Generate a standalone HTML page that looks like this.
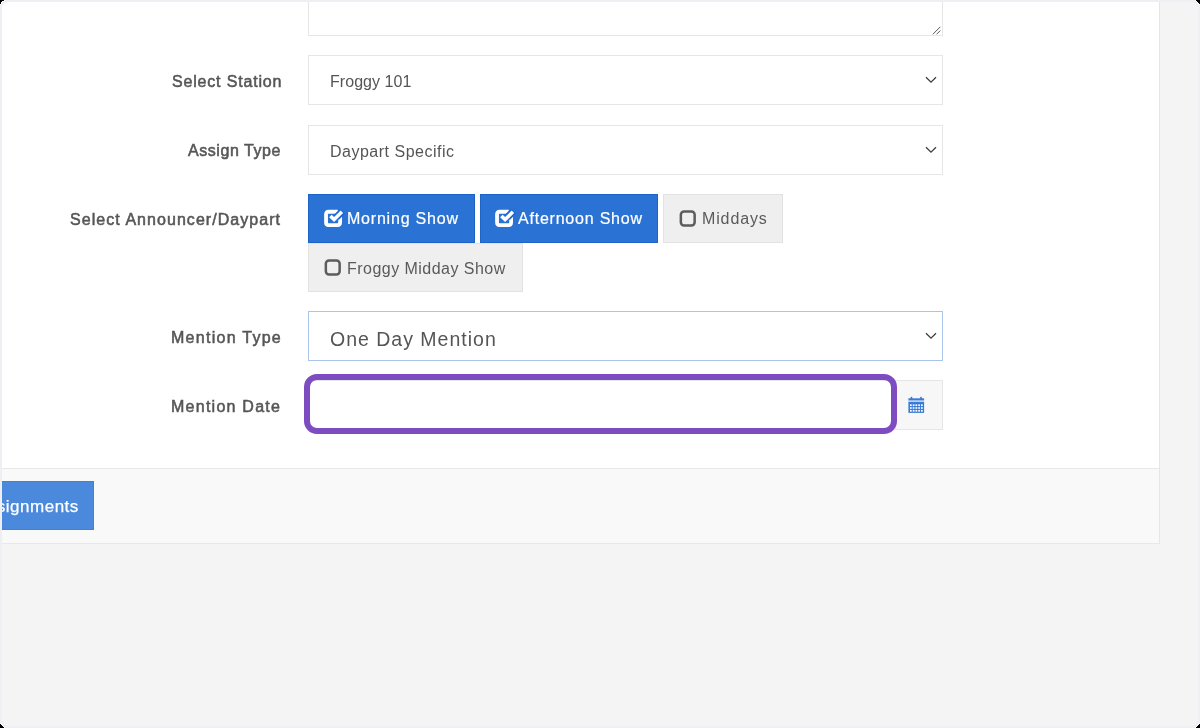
<!DOCTYPE html>
<html><head><meta charset="utf-8">
<style>
html,body{margin:0;padding:0;width:1200px;height:728px;overflow:hidden;background:#f4f4f4;}
body{position:relative;font-family:"Liberation Sans",sans-serif;}
.abs{position:absolute;}
.t{position:absolute;white-space:nowrap;line-height:20px;will-change:transform;}
.inner{position:absolute;left:2px;top:2px;width:1196px;height:724px;border-radius:6px;box-shadow:0 0 0 8px #efeef3;z-index:50;}
.card{position:absolute;left:0;top:0;width:1159px;height:468px;background:#fff;border-right:1px solid #e6e6e6;}
.footer{position:absolute;left:0;top:468px;width:1159px;height:74px;background:#f9f9f9;border-top:1px solid #e8e8e8;border-bottom:1px solid #e8e8e8;border-right:1px solid #e6e6e6;}
.box{position:absolute;box-sizing:border-box;}
</style></head><body>
<div class="card"></div>
<div class="footer"></div>

<div class="box" style="left:308px;top:-20px;width:635px;height:56px;border:1px solid #e6e6e6;background:#fff"></div>
<svg class="abs" style="left:931px;top:25px" width="10" height="10" viewBox="0 0 10 10"><path d="M9.3 1.8 L1.8 9.3 M9.3 5.6 L5.6 9.3" stroke="#5a5a5a" stroke-width="1" fill="none"/></svg>

<div class="t" style="left:172px;top:72px;font-size:16px;letter-spacing:0.82px;color:#555;-webkit-text-stroke:0.55px #575757;">Select Station</div>
<div class="box" style="left:308px;top:55px;width:635px;height:50px;border:1px solid #e6e6e6;background:#fff"></div>
<div class="t" style="left:330px;top:72px;font-size:16px;letter-spacing:0.05px;color:#555;">Froggy 101</div>
<svg class="abs" style="left:925px;top:76px" width="12" height="8" viewBox="0 0 12 8"><path d="M1 1.2 L6 6.2 L11 1.2" stroke="#3d3d3d" stroke-width="1.3" fill="none"/></svg>

<div class="t" style="left:188px;top:141px;font-size:16px;letter-spacing:0.56px;color:#555;-webkit-text-stroke:0.55px #575757;">Assign Type</div>
<div class="box" style="left:308px;top:125px;width:635px;height:50px;border:1px solid #e6e6e6;background:#fff"></div>
<div class="t" style="left:330px;top:142px;font-size:16px;letter-spacing:0.5px;color:#555;">Daypart Specific</div>
<svg class="abs" style="left:925px;top:146px" width="12" height="8" viewBox="0 0 12 8"><path d="M1 1.2 L6 6.2 L11 1.2" stroke="#3d3d3d" stroke-width="1.3" fill="none"/></svg>

<div class="t" style="left:70px;top:210px;font-size:16px;letter-spacing:1.05px;color:#555;-webkit-text-stroke:0.55px #575757;">Select Announcer/Daypart</div>

<div class="box" style="left:308px;top:194px;width:167px;height:49px;background:#2a73d5;border:1px solid #1e64c8"></div>
<svg class="abs" style="left:318px;top:204px" width="30" height="28" viewBox="0 0 30 28"><path d="M19.8 7.75 L10.6 7.75 Q8.05 7.75 8.05 10.3 L8.05 18.5 Q8.05 21.05 10.6 21.05 L19.55 21.05 Q22.1 21.05 22.1 18.5 L22.1 12" stroke="#fff" stroke-width="3.8" fill="none"/><path d="M18.2 13.5 L24.5 7.2" stroke="#1e68d2" stroke-width="7.2" fill="none" stroke-linejoin="miter"/><path d="M12.4 11.9 L16.1 15.6 L23.9 7.8" stroke="#fff" stroke-width="3.5" fill="none" stroke-linejoin="miter"/></svg>
<div class="t" style="left:347px;top:209px;font-size:16px;letter-spacing:0.79px;color:#fff;-webkit-text-stroke:0.2px #fff;">Morning Show</div>
<div class="box" style="left:480px;top:194px;width:178px;height:49px;background:#2a73d5;border:1px solid #1e64c8"></div>
<svg class="abs" style="left:489px;top:204px" width="30" height="28" viewBox="0 0 30 28"><path d="M19.8 7.75 L10.6 7.75 Q8.05 7.75 8.05 10.3 L8.05 18.5 Q8.05 21.05 10.6 21.05 L19.55 21.05 Q22.1 21.05 22.1 18.5 L22.1 12" stroke="#fff" stroke-width="3.8" fill="none"/><path d="M18.2 13.5 L24.5 7.2" stroke="#1e68d2" stroke-width="7.2" fill="none" stroke-linejoin="miter"/><path d="M12.4 11.9 L16.1 15.6 L23.9 7.8" stroke="#fff" stroke-width="3.5" fill="none" stroke-linejoin="miter"/></svg>
<div class="t" style="left:518px;top:209px;font-size:16px;letter-spacing:0.78px;color:#fff;-webkit-text-stroke:0.2px #fff;">Afternoon Show</div>
<div class="box" style="left:663px;top:194px;width:120px;height:49px;background:#efefef;border:1px solid #e2e2e2"></div>
<svg class="abs" style="left:679px;top:210px" width="18" height="18" viewBox="0 0 18 18"><rect x="1.85" y="1.4" width="13.8" height="14.05" rx="3.2" stroke="#5c5c5c" stroke-width="2.5" fill="none"/></svg>
<div class="t" style="left:702px;top:209px;font-size:16px;letter-spacing:0.87px;color:#5a5a5a;">Middays</div>
<div class="box" style="left:308px;top:243px;width:215px;height:49px;background:#efefef;border:1px solid #e2e2e2"></div>
<svg class="abs" style="left:324px;top:259px" width="18" height="18" viewBox="0 0 18 18"><rect x="1.85" y="1.4" width="13.8" height="14.05" rx="3.2" stroke="#5c5c5c" stroke-width="2.5" fill="none"/></svg>
<div class="t" style="left:347px;top:259px;font-size:16px;letter-spacing:0.47px;color:#5a5a5a;">Froggy Midday Show</div>

<div class="t" style="left:171px;top:328px;font-size:16px;letter-spacing:1.27px;color:#555;-webkit-text-stroke:0.55px #575757;">Mention Type</div>
<div class="box" style="left:308px;top:311px;width:635px;height:50px;border:1px solid #a9c5ec;background:#fff"></div>
<div class="t" style="left:330px;top:327px;font-size:19.5px;letter-spacing:1.0px;color:#555;line-height:24px;">One Day Mention</div>
<svg class="abs" style="left:925px;top:332px" width="12" height="8" viewBox="0 0 12 8"><path d="M1 1.2 L6 6.2 L11 1.2" stroke="#3d3d3d" stroke-width="1.3" fill="none"/></svg>

<div class="t" style="left:171px;top:397px;font-size:16px;letter-spacing:1.25px;color:#555;-webkit-text-stroke:0.55px #575757;">Mention Date</div>
<div class="box" style="left:308px;top:380px;width:589px;height:50px;border:1px solid #e6e6e6;background:#fff"></div>
<div class="box" style="left:895px;top:380px;width:48px;height:50px;background:#f7f7f7;border:1px solid #e6e6e6"></div>
<svg class="abs" style="left:902px;top:390px" width="28" height="28" viewBox="0 0 28 28">
<rect x="6.4" y="8.3" width="15.7" height="2.1" fill="#3a7bd6"/>
<rect x="8.6" y="6.8" width="1.7" height="2.4" rx="0.8" fill="#3a7bd6"/><rect x="18.2" y="6.8" width="1.7" height="2.4" rx="0.8" fill="#3a7bd6"/>
<rect x="6.4" y="10.4" width="15.7" height="1.5" fill="#3a7bd6" opacity="0.25"/>
<rect x="6.4" y="11.9" width="15.7" height="11.0" fill="#3a7bd6"/>
<rect x="8.00" y="14.35" width="1.7" height="1.7" fill="#fff"/><rect x="10.75" y="14.35" width="1.7" height="1.7" fill="#fff"/><rect x="13.50" y="14.35" width="1.7" height="1.7" fill="#fff"/><rect x="16.25" y="14.35" width="1.7" height="1.7" fill="#fff"/><rect x="19.00" y="14.35" width="1.7" height="1.7" fill="#fff"/><rect x="8.00" y="17.15" width="1.7" height="1.7" fill="#fff"/><rect x="10.75" y="17.15" width="1.7" height="1.7" fill="#fff"/><rect x="13.50" y="17.15" width="1.7" height="1.7" fill="#fff"/><rect x="16.25" y="17.15" width="1.7" height="1.7" fill="#fff"/><rect x="19.00" y="17.15" width="1.7" height="1.7" fill="#fff"/><rect x="8.00" y="19.95" width="1.7" height="1.7" fill="#fff"/><rect x="10.75" y="19.95" width="1.7" height="1.7" fill="#fff"/><rect x="13.50" y="19.95" width="1.7" height="1.7" fill="#fff"/><rect x="16.25" y="19.95" width="1.7" height="1.7" fill="#fff"/><rect x="19.00" y="19.95" width="1.7" height="1.7" fill="#fff"/>
</svg>
<div class="box" style="left:304px;top:374px;width:593px;height:60px;border:6px solid #7d4cc1;border-radius:13px;"></div>

<div class="box" style="left:-60px;top:481px;width:154px;height:49px;background:#4a89dc;border:1px solid #3f80d8"></div>
<div class="t" style="left:-24px;top:497px;font-size:17px;letter-spacing:0.5px;color:#fff;-webkit-text-stroke:0.25px #fff;">Assignments</div>

<div class="inner"></div>
<svg class="abs" style="left:0;top:0;z-index:60" width="1200" height="728" shape-rendering="crispEdges">
<rect x="0" y="0" width="1" height="1" fill="#000"/>
<rect x="1" y="0" width="1" height="1" fill="#000"/>
<rect x="2" y="0" width="1" height="1" fill="#000"/>
<rect x="3" y="0" width="1" height="1" fill="#000"/>
<rect x="0" y="1" width="1" height="1" fill="#000"/>
<rect x="1" y="1" width="1" height="1" fill="#000"/>
<rect x="0" y="2" width="1" height="1" fill="#000"/>
<rect x="0" y="3" width="1" height="1" fill="#000"/>
<rect x="4" y="0" width="1" height="1" fill="#fff"/>
<rect x="2" y="1" width="1" height="1" fill="#fff"/>
<rect x="3" y="1" width="1" height="1" fill="#fff"/>
<rect x="1" y="2" width="1" height="1" fill="#fff"/>
<rect x="1" y="3" width="1" height="1" fill="#fff"/>
<rect x="0" y="4" width="1" height="1" fill="#fff"/>
<rect x="1199" y="0" width="1" height="1" fill="#000"/>
<rect x="1198" y="0" width="1" height="1" fill="#000"/>
<rect x="1197" y="0" width="1" height="1" fill="#000"/>
<rect x="1196" y="0" width="1" height="1" fill="#000"/>
<rect x="1199" y="1" width="1" height="1" fill="#000"/>
<rect x="1198" y="1" width="1" height="1" fill="#000"/>
<rect x="1197" y="1" width="1" height="1" fill="#000"/>
<rect x="1199" y="2" width="1" height="1" fill="#000"/>
<rect x="1198" y="2" width="1" height="1" fill="#000"/>
<rect x="1199" y="3" width="1" height="1" fill="#000"/>
<rect x="1195" y="0" width="1" height="1" fill="#fff"/>
<rect x="1196" y="1" width="1" height="1" fill="#fff"/>
<rect x="1197" y="2" width="1" height="1" fill="#fff"/>
<rect x="1198" y="3" width="1" height="1" fill="#fff"/>
<rect x="1199" y="4" width="1" height="1" fill="#fff"/>
<rect x="1199" y="727" width="1" height="1" fill="#000"/>
<rect x="1198" y="727" width="1" height="1" fill="#000"/>
<rect x="1197" y="727" width="1" height="1" fill="#000"/>
<rect x="1196" y="727" width="1" height="1" fill="#000"/>
<rect x="1199" y="726" width="1" height="1" fill="#000"/>
<rect x="1198" y="726" width="1" height="1" fill="#000"/>
<rect x="1197" y="726" width="1" height="1" fill="#000"/>
<rect x="1199" y="725" width="1" height="1" fill="#000"/>
<rect x="1198" y="725" width="1" height="1" fill="#000"/>
<rect x="1199" y="724" width="1" height="1" fill="#000"/>
<rect x="1195" y="727" width="1" height="1" fill="#fff"/>
<rect x="1196" y="726" width="1" height="1" fill="#fff"/>
<rect x="1197" y="725" width="1" height="1" fill="#fff"/>
<rect x="1198" y="724" width="1" height="1" fill="#fff"/>
<rect x="1199" y="723" width="1" height="1" fill="#fff"/>
<rect x="0" y="727" width="1" height="1" fill="#000"/>
<rect x="1" y="727" width="1" height="1" fill="#000"/>
<rect x="2" y="727" width="1" height="1" fill="#000"/>
<rect x="3" y="727" width="1" height="1" fill="#000"/>
<rect x="0" y="726" width="1" height="1" fill="#000"/>
<rect x="1" y="726" width="1" height="1" fill="#000"/>
<rect x="2" y="726" width="1" height="1" fill="#000"/>
<rect x="0" y="725" width="1" height="1" fill="#000"/>
<rect x="1" y="725" width="1" height="1" fill="#000"/>
<rect x="0" y="724" width="1" height="1" fill="#000"/>
<rect x="4" y="727" width="1" height="1" fill="#fff"/>
<rect x="3" y="726" width="1" height="1" fill="#fff"/>
<rect x="2" y="725" width="1" height="1" fill="#fff"/>
<rect x="1" y="724" width="1" height="1" fill="#fff"/>
<rect x="0" y="723" width="1" height="1" fill="#fff"/>
</svg>
</body></html>
